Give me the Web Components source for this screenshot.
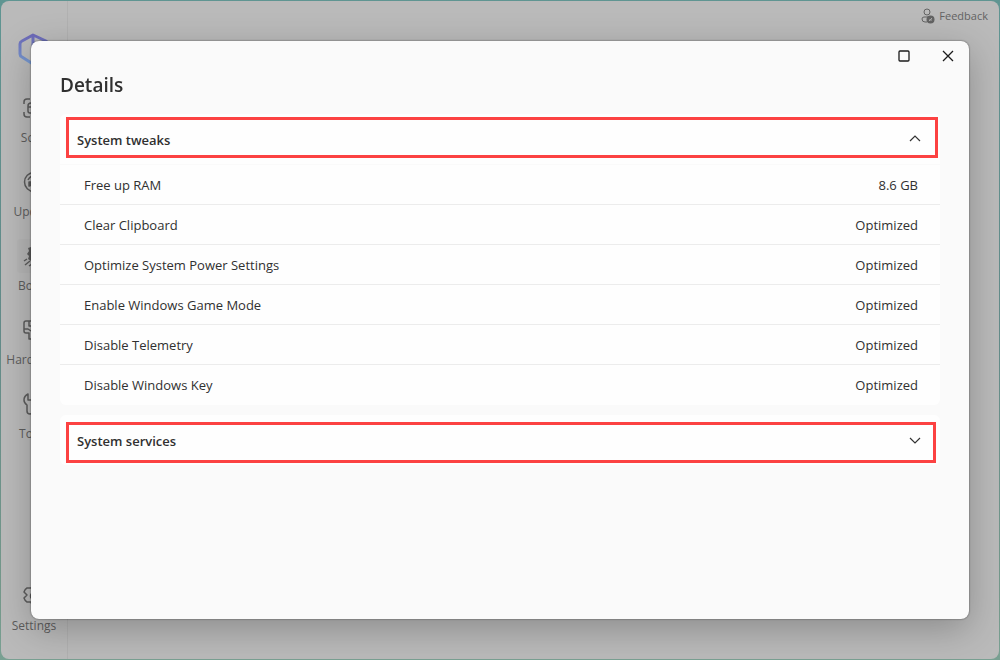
<!DOCTYPE html>
<html lang="en">
<head>
<meta charset="utf-8">
<title>Details</title>
<style>
html,body{height:100%}
body{margin:0;font-family:"Open Sans","Noto Sans",sans-serif;color:#303030;
background:linear-gradient(180deg,#5f9592,#638c8a 50%,#759a8c 90%,#79a092)}
</style>
</head>
<body>
<app-window>
  <nav-rail slot="rail">
    <nav-item icon="scan">Scan</nav-item>
    <nav-item icon="update">Update</nav-item>
    <nav-item icon="boost" current>Boost</nav-item>
    <nav-item icon="hardware">Hardware</nav-item>
    <nav-item icon="tools">Tools</nav-item>
    <nav-item icon="settings" slot="end">Settings</nav-item>
  </nav-rail>
</app-window>
<details-dialog heading="Details">
  <accordion-card id="tweaks" heading="System tweaks" open></accordion-card>
  <accordion-card id="services" heading="System services"></accordion-card>
</details-dialog>
<script>
const define = (name, html, setup) => customElements.define(name, class extends HTMLElement {
  connectedCallback() {
    if (this.shadowRoot) return;
    this.attachShadow({mode: 'open'}).innerHTML = html;
    if (setup) setup.call(this, this.shadowRoot);
  }
});

const icons = {
  scan: '<path d="M1 7V5q0-3 3-3h3M15 2h3q3 0 3 3v2M21 15v2q0 3-3 3h-3M7 20H4q-3 0-3-3v-2M17 6H8Q5 6 5 9v5q0 2 2 2h10zM5 10h12"/>',
  update: '<circle cx="11" cy="11" r="9.500"/><path d="M5 9q2-4 6-4 4 0 5 4M17 5v4h-4"/><path fill="currentColor" d="M6 11h3V8l2 2v6l-2-2-3 1z"/>',
  boost: '<path fill="currentColor" stroke="none" d="M8 2h12v12l-6 7-4-1-2-4-3-2 1-3-2-2 2-3-1-3z"/><path d="M4 14l-3 2M7 16l-5 4M9 19l-3 2"/>',
  hardware: '<path d="M9 2H3Q1 2 1 4v8q0 2 2 2h3v6h5M1 10h4l3 2M6 2v5h4l3-3h6q2 0 2 2v8M14 12h7v8h-7z"/>',
  tools: '<path d="M5 1Q1 3 1 7q0 3 3 5v6q0 3 3 3t3-3v-6q3-2 3-5 0-4-3-6v6H5zM16 1h4v8h-4zM18 9v3M16 12h4v9h-4z"/>',
  settings: '<circle cx="11" cy="11" r="3.500"/><path d="M9 2h4l1 3 3-1 3 4-2 3 2 3-3 4-3-1-1 3H9l-1-3H4q-2-1-3-4l3-3-3-3q1-3 3-4h4z"/>'
};

define('nav-item', `<style>
:host{display:block}
button{all:unset;display:grid;justify-items:center;width:100%;color:#5d5d5d;font-size:12px;line-height:16px}
.tile{display:grid;place-items:center;width:34px;height:34px;border-radius:4px;margin-bottom:5px}
:host([current]) .tile{background:#b6b6b6}
svg{width:22px;height:22px;fill:none;stroke:currentColor;stroke-width:1.5;stroke-linejoin:round}
</style><button type="button"><span class="tile"></span><span><slot></slot></span></button>`, function (root) {
  root.querySelector('.tile').innerHTML = '<svg viewBox="0 0 22 22" aria-hidden="true">' + icons[this.getAttribute('icon')] + '</svg>';
});

define('nav-rail', `<style>
:host{display:flex;flex-direction:column;box-sizing:border-box;width:67px;height:100%;padding:30px 0 25px;border-right:1px solid #b1b1b1}
.logo{width:32px;height:36px;margin:0 auto 24px;display:block}
nav{display:flex;flex-direction:column;gap:19px}
.end{margin-top:auto}
</style>
<svg class="logo" viewBox="0 0 32 36" aria-hidden="true"><defs><linearGradient id="g" x2="0" y2="1"><stop stop-color="#6d69b8"/><stop offset="1" stop-color="#779bd0"/></linearGradient></defs>
<path d="M15 4 28 10Q30 11 30 13V23Q30 25 28 26L15 33 4 26Q2 25 2 23V13Q2 11 4 10Z M15 4V18" fill="none" stroke="url(#g)" stroke-width="3" stroke-linejoin="round"/></svg>
<nav><slot></slot></nav><div class="end"><slot name="end"></slot></div>`);

define('feedback-button', `<style>
:host{display:block}
button{all:unset;display:flex;align-items:center;gap:4px;color:#636363;font-size:11px;line-height:16px}
svg{width:14px;height:16px}
</style><button type="button"><svg viewBox="0 0 14 16" fill="none" stroke="currentColor" aria-hidden="true"><circle cx="6" cy="4" r="3"/><path d="M6 14H4Q1 14 1 11q0-2 2-2h4"/><circle cx="9.500" cy="11.500" r="4" fill="currentColor" stroke="none"/><path d="M8 12h3M11 10l-3 3" stroke="#aaa"/></svg>Feedback</button>`);

define('app-window', `<style>
:host{display:block;box-sizing:border-box;height:100vh;padding:1px}
.frame{display:flex;box-sizing:border-box;height:100%;background:#bababa;border-radius:8px;overflow:hidden}
main{flex:1;display:flex;justify-content:flex-end;align-items:flex-start;padding:7px 11px}
</style><div class="frame"><slot name="rail"></slot><main><feedback-button></feedback-button></main></div>`);

define('details-dialog', `<style>
:host{position:fixed;inset:0;display:flex;box-sizing:border-box;padding:41px 31px}
section{flex:1;box-sizing:border-box;background:#fafafa;border-radius:8px;padding:0 29px;box-shadow:0 0 2px rgba(0,0,0,.6),0 10px 36px rgba(0,0,0,.25)}
.bar{display:flex;justify-content:flex-end;gap:20px;height:28px;padding-top:3px;margin-right:-20px;box-sizing:border-box}
.bar button{all:unset;width:24px;height:24px;display:grid;place-items:center}
svg{width:12px;height:12px;fill:none;stroke:#1b1b1b;stroke-width:1.3}
h1{margin:0 0 13px;font-size:19px;line-height:32px;font-weight:600}
.cards{display:grid;gap:10px}
</style><section role="dialog" aria-labelledby="title"><div class="bar">
<button type="button" aria-label="Maximize"><svg viewBox="0 0 12 12"><rect x="1" y="1" width="10" height="10" rx="1"/></svg></button>
<button type="button" aria-label="Close"><svg viewBox="0 0 12 12"><path d="M1 1 11 11M11 1 1 11"/></svg></button></div>
<h1 id="title"></h1><div class="cards"><slot></slot></div></section>`, function (root) {
  root.querySelector('h1').textContent = this.getAttribute('heading');
});

const rows = {tweaks: [
  ['Free up RAM', '8.6 GB'],
  ['Clear Clipboard', 'Optimized'],
  ['Optimize System Power Settings', 'Optimized'],
  ['Enable Windows Game Mode', 'Optimized'],
  ['Disable Telemetry', 'Optimized'],
  ['Disable Windows Key', 'Optimized']
]};

define('accordion-card', `<style>
:host{display:block;position:relative;background:#fefefe;border-radius:6px}
h2{margin:0}
button{all:unset;box-sizing:border-box;width:100%;height:50px;display:flex;align-items:center;justify-content:space-between;padding:2px 18px 0 17px;font-size:13px;line-height:20px;font-weight:600}
svg{width:14px;height:14px;fill:none;stroke:#333;stroke-width:1.2}
.mark{position:absolute;left:6px;box-sizing:border-box;height:41px;border:3px solid #fc4242;pointer-events:none;top:7px;right:4px}
:host([open]) .mark{top:3px;right:2px}
:host([open]) button{height:51px;border-bottom:1px solid #fafafa}
table{width:100%;border-collapse:separate;border-spacing:0;font-size:13px;line-height:20px}
th,td{height:39px;padding:0;font-weight:400;border-bottom:1px solid #ececec}
th{text-align:left;padding-left:24px}
td{text-align:right;padding-right:22px}
tr:last-child>*{border-bottom-color:transparent}
</style><h2><button type="button"><span></span><svg viewBox="0 0 14 14" aria-hidden="true"><path/></svg></button></h2><table hidden></table><div class="mark"></div>`, function (root) {
  const table = root.querySelector('table'), button = root.querySelector('button');
  root.querySelector('span').textContent = this.getAttribute('heading');
  table.innerHTML = (rows[this.id] || []).map(([name, value]) => `<tr><th scope="row">${name}</th><td>${value}</td></tr>`).join('');
  const sync = () => {
    table.hidden = !this.hasAttribute('open');
    root.querySelector('path').setAttribute('d', table.hidden ? 'M2 4 7 9 12 4' : 'M2 8 7 3 12 8');
    button.setAttribute('aria-expanded', String(!table.hidden));
  };
  button.addEventListener('click', () => { this.toggleAttribute('open'); sync(); });
  sync();
});
</script>
</body>
</html>
